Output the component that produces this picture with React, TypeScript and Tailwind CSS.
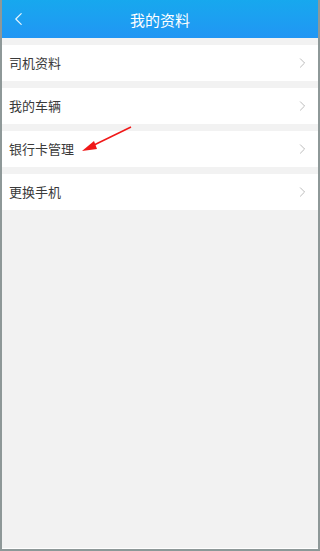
import { type FunctionComponent } from "react";

const items = ["司机资料", "我的车辆", "银行卡管理", "更换手机"];

const Chevron: FunctionComponent<{ className?: string }> = ({ className }) => (
  <svg viewBox="0 0 10 16" className={className} fill="none" stroke="currentColor" strokeWidth="1.3" strokeLinecap="round" strokeLinejoin="round">
    <path d="M2 2l6 6-6 6" />
  </svg>
);

const App: FunctionComponent = () => {
  return (
    <div
      className="relative w-[320px] h-[551px] flex flex-col bg-[#8e9898] px-[2px] pb-[2px] overflow-hidden"
      style={{ fontFamily: '"Noto Sans CJK SC", "Noto Sans", sans-serif' }}
    >
      <div className="flex-1 flex flex-col bg-[#f2f2f2]">
        <header className="h-[38px] flex items-center relative bg-gradient-to-b from-[#17a8ee] to-[#2196f4] text-white">
          <Chevron className="absolute left-[12px] top-[11px] w-[9px] h-[16px] rotate-180 text-white/90" />
          <h1 className="flex-1 text-center text-[15px] leading-none">我的资料</h1>
        </header>
        <div className="flex flex-col gap-[7px] pt-[7px]">
          {items.map((label) => (
            <div key={label} className="h-[36px] bg-white flex items-center justify-between pl-[7px] pr-[12px]">
              <span className="text-[13px] leading-none text-[#3a3a3a] pb-[1px]">{label}</span>
              <Chevron className="w-[7px] h-[12px] text-[#b5b5b5]" />
            </div>
          ))}
        </div>
        <div className="flex-1" />
        <div className="h-[1px] bg-white" />
      </div>
      <svg className="absolute left-0 top-0 pointer-events-none" width="320" height="551">
        <line x1="131" y1="127" x2="92" y2="146" stroke="#f01818" strokeWidth="1.5" />
        <polygon points="82,151 94,141 97,149" fill="#f01818" />
      </svg>
    </div>
  );
};

export default App;
